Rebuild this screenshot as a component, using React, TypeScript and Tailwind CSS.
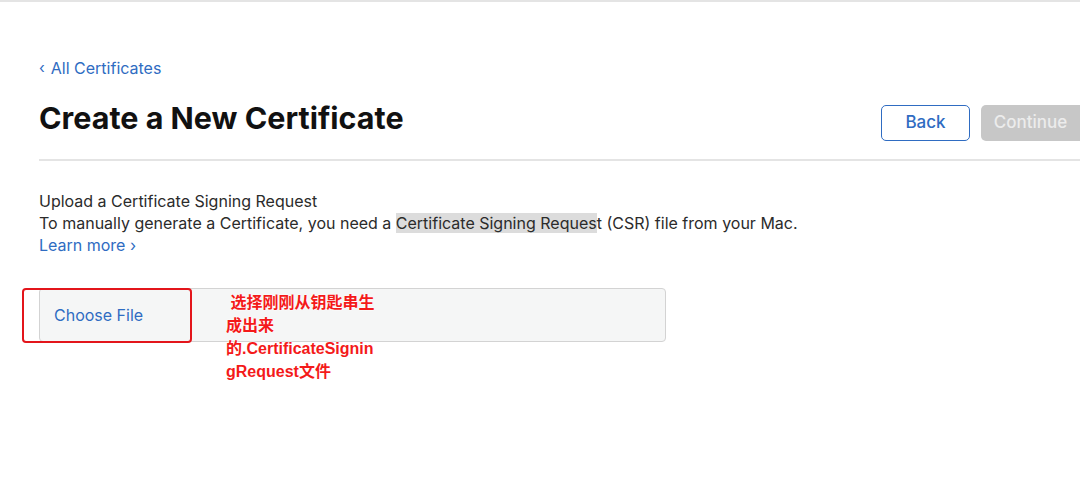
export default function App() {
  return (
    <div className="min-h-screen w-[1080px] overflow-hidden border-t-2 border-[#e4e4e4] bg-white font-['Inter',sans-serif] text-[#333]">
      <div className="pl-[39px]">
        <a className="mt-[54px] flex h-6 items-center gap-[6px] text-[16px] text-[#2f6cc2]">
          <span className="text-[15px]">‹</span>
          <span>All Certificates</span>
        </a>

        <div className="mt-[20px] flex items-start justify-between">
          <h1 className="text-[30.5px] font-bold leading-[36px] text-[#111]">Create a New Certificate</h1>
          <div className="mt-[5px] flex gap-[11px]">
            <button className="h-[36px] w-[89px] rounded-[5px] border border-[#2f6cc2] text-[17px] font-medium text-[#2f6cc2]">
              Back
            </button>
            <button className="h-[36px] w-[99px] rounded-l-[5px] bg-[#c7c7c7] text-[17px] font-medium text-[#ececec]">
              Continue
            </button>
          </div>
        </div>

        <div className="mt-[18px] h-[2px] bg-[#e4e4e4]" />

        <div className="mt-[29px] text-[16px] leading-[22px] text-[#2b2b2b]">
          <p>Upload a Certificate Signing Request</p>
          <p>
            To manually generate a Certificate, you need a{" "}
            <span className="bg-[#dcdcdc]">Certificate Signing Reques</span>t (CSR) file from your Mac.
          </p>
          <a className="text-[#2f6cc2]">Learn more ›</a>
        </div>

        <div className="relative mt-[32px] flex h-[54px] w-[627px] items-center rounded-[4px] border border-[#d3d3d3] bg-[#f5f6f6] pl-[14px]">
          <span className="text-[16px] text-[#2f6cc2]">Choose File</span>

          {/* red annotation */}
          <div className="absolute left-[-18px] top-[-1px] h-[55px] w-[170px] rounded-[4px] border-2 border-[#e3151b]" />
          <div className="absolute left-[186px] top-[2px] font-['Liberation_Sans','Noto_Sans_CJK_SC',sans-serif] text-[16px] font-bold leading-[23px] text-[#f41a1a] [text-shadow:0_0_2px_#fff,0_0_2px_#fff]">
            <p>&nbsp;选择刚刚从钥匙串生</p>
            <p>成出来</p>
            <p>的.CertificateSignin</p>
            <p>gRequest文件</p>
          </div>
        </div>
      </div>
    </div>
  );
}
